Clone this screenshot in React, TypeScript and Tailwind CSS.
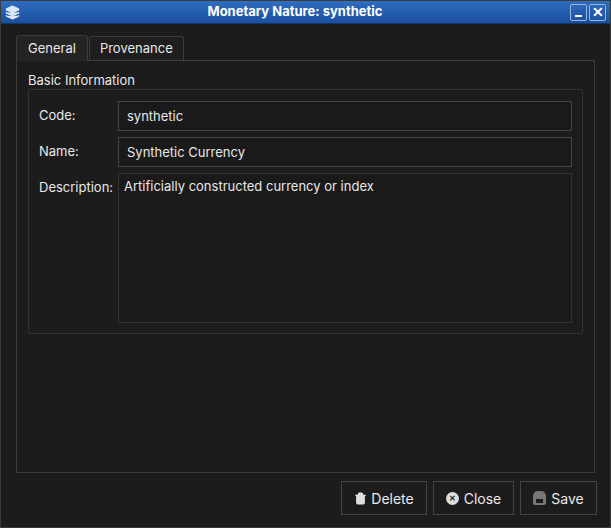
import { Trash2, Layers } from "lucide-react";

export default function App() {
  return (
    <div className="w-[611px] h-[528px] bg-[#1c1c1c] flex flex-col border border-[#3a3a3a] text-[#e8e8e8] text-[13px]" style={{ fontFamily: "Inter, 'Noto Sans', sans-serif" }}>
      <div className="h-[24px] flex items-center px-[4px] bg-gradient-to-b from-[#2f6dc0] to-[#1b4f9c] border-b border-[#0f3570]">
        <Layers className="w-[15px] h-[15px] text-[#dfe8f5]" fill="#dfe8f5" />
        <div className="flex-1 text-center text-white font-bold text-[13px]">Monetary Nature: synthetic</div>
        <div className="flex gap-[2px]">
          <div className="w-[17px] h-[17px] border border-[#9ab5dc] rounded-[2px] flex items-end justify-center pb-[3px]"><div className="w-[7px] h-[2px] bg-white" /></div>
          <div className="w-[17px] h-[17px] border border-[#9ab5dc] rounded-[2px] flex items-center justify-center text-white font-bold text-[14px] leading-none">✕</div>
        </div>
      </div>
      <div className="flex-1 flex flex-col px-[15px] pt-[12px]">
        <div className="flex h-[24px] items-end">
          <div className="h-[26px] px-[11px] flex items-center bg-[#242424] border border-[#3c3c3c] border-b-0 rounded-t-[3px] relative top-[1px]">General</div>
          <div className="h-[24px] px-[10px] ml-[1px] flex items-center bg-[#1e1e1e] border border-[#3c3c3c] border-b-0 rounded-t-[3px]">Provenance</div>
        </div>
        <div className="h-[413px] border border-[#3c3c3c] px-[11px] pt-[11px]">
          <div className="leading-[16px] mb-[1px]">Basic Information</div>
          <div className="border border-[#333] rounded-[2px] h-[245px] px-[10px] pt-[11px] flex flex-col gap-[6px]">
            {[["Code:", "synthetic"], ["Name:", "Synthetic Currency"]].map(([l, v]) => (
              <div key={l} className="flex items-center">
                <div className="w-[79px] relative -top-[1px]">{l}</div>
                <div className="flex-1 h-[30px] border border-[#444] bg-[#1a1a1a] flex items-center px-[8px]">{v}</div>
              </div>
            ))}
            <div className="flex">
              <div className="w-[79px] pt-[5px]">Description:</div>
              <div className="flex-1 h-[150px] border border-[#333] bg-[#1a1a1a] px-[5px] pt-[3px]">Artificially constructed currency or index</div>
            </div>
          </div>
        </div>
      </div>
      <div className="h-[55px] flex justify-end items-start gap-[6px] pr-[13px] pt-[8px]">
        <button className="w-[86px] h-[34px] border border-[#444] flex items-center justify-center gap-[4px] text-[14px]"><Trash2 className="w-[13px] h-[13px]" fill="#ddd" />Delete</button>
        <button className="w-[81px] h-[34px] border border-[#444] flex items-center justify-center gap-[5px] text-[14px]"><span className="w-[13px] h-[13px] rounded-full bg-[#ddd] text-[#1c1c1c] text-[8px] font-bold flex items-center justify-center">✕</span>Close</button>
        <button className="w-[77px] h-[34px] border border-[#444] flex items-center justify-center gap-[5px] text-[14px]"><span className="w-[13px] h-[14px] rounded-t-[5px] rounded-b-[2px] bg-[#777] flex items-end justify-center pb-[2px]"><span className="w-[7px] h-[4px] bg-[#1c1c1c]" /></span>Save</button>
      </div>
    </div>
  );
}
